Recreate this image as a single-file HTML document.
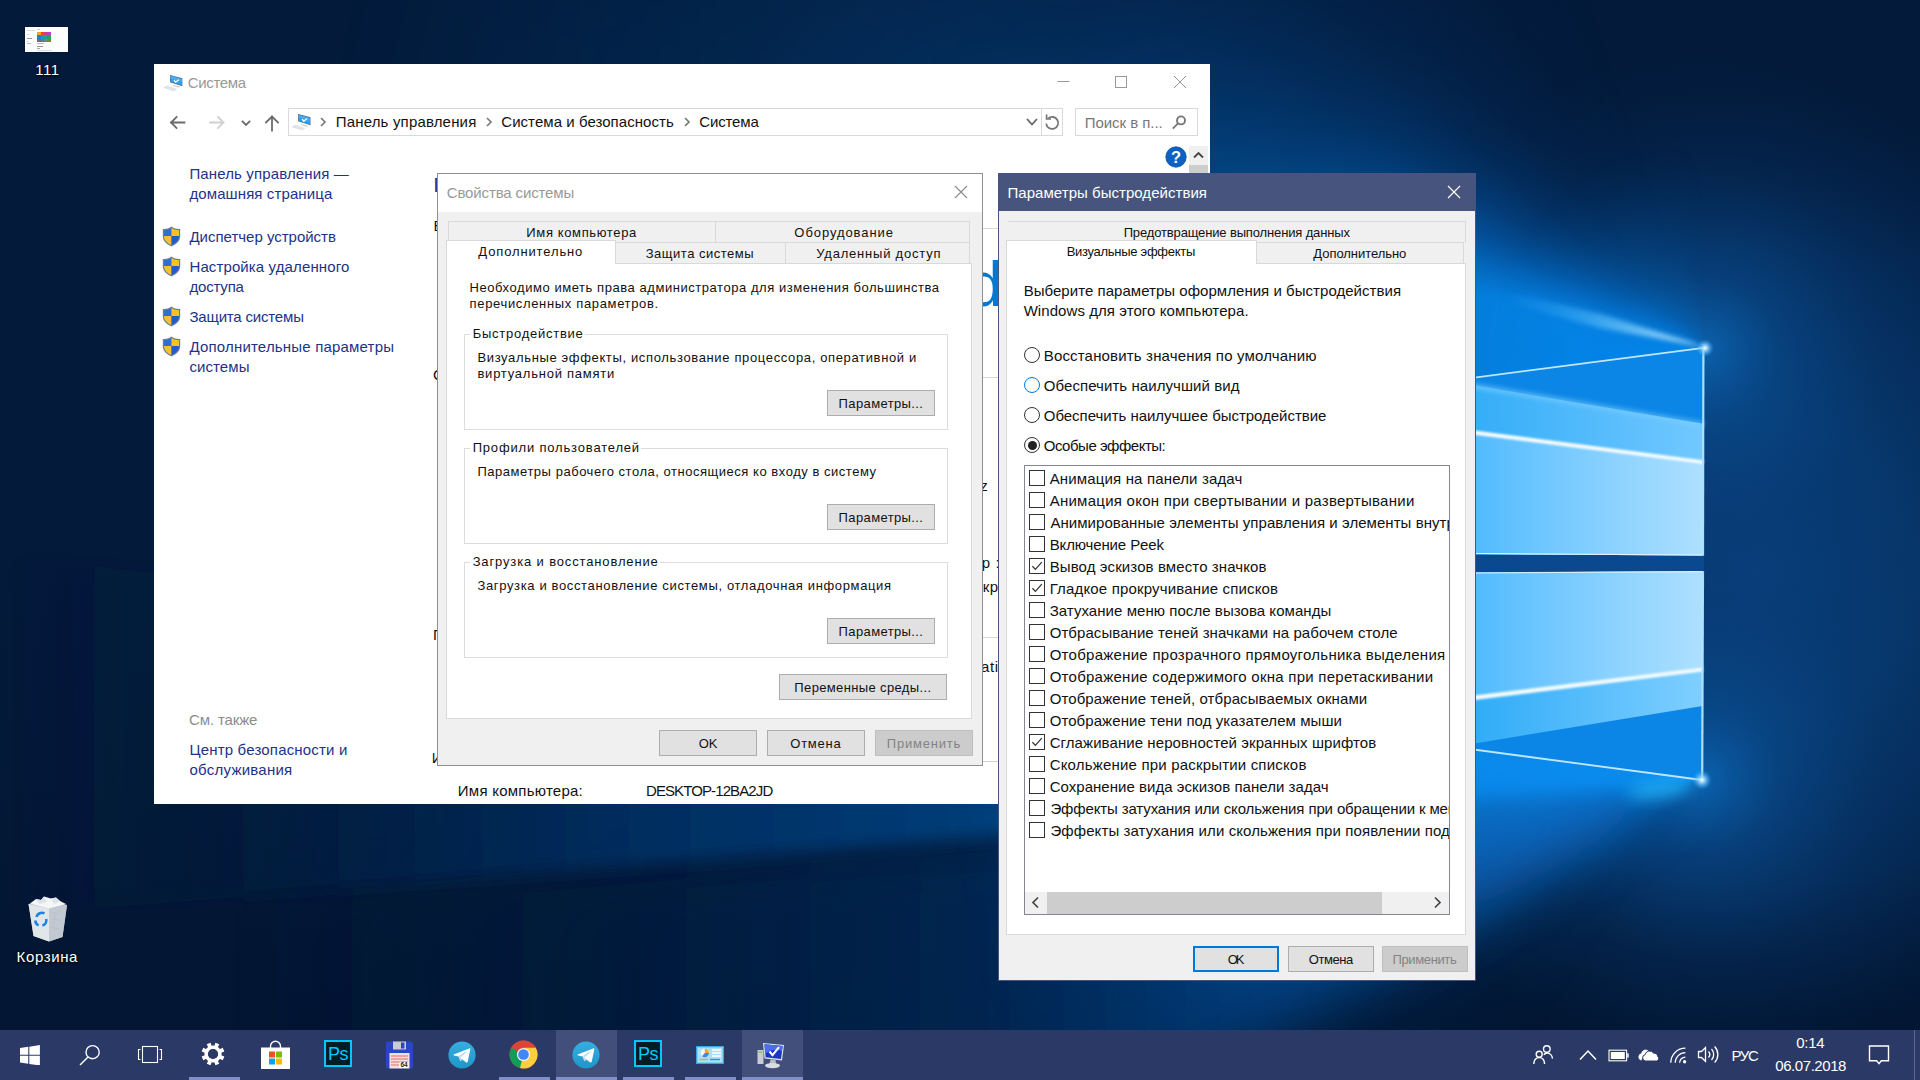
<!DOCTYPE html>
<html lang="ru"><head><meta charset="utf-8"><title>Система</title>
<style>
html,body{margin:0;padding:0;background:#03173a;overflow:hidden}
body{width:1920px;height:1080px;overflow:hidden;position:relative;font-family:"Liberation Sans", "DejaVu Sans", sans-serif;}
.wall{position:absolute;left:0;top:0}
.t{position:absolute;white-space:nowrap;line-height:1;font-family:"Liberation Sans", "DejaVu Sans", sans-serif}
.abs{position:absolute}
.btn{position:absolute;box-sizing:border-box;background:#e1e1e1;border:1px solid #adadad}
.btn.dis{background:#cccccc;border-color:#bfbfbf}
.btn.def{border:2px solid #0078d7}
.grp{position:absolute;box-sizing:border-box;border:1px solid #dcdcdc}
.tab{position:absolute;box-sizing:border-box;background:#f0f0f0;border:1px solid #d9d9d9}
.tab.sel{background:#fff;border-bottom:none}
.page{position:absolute;box-sizing:border-box;background:#fff;border:1px solid #d9d9d9}
.cb{position:absolute;box-sizing:border-box;width:16px;height:16px;border:1px solid #333;background:#fff}
.rad{position:absolute;box-sizing:border-box;width:16px;height:16px;border:1px solid #333;border-radius:50%;background:#fff}
.sh{text-shadow:0 1px 2px rgba(0,0,0,.9),0 0 3px rgba(0,0,0,.6)}
</style></head><body>

<svg class="wall" width="1920" height="1080" viewBox="0 0 1920 1080">
<defs>
<linearGradient id="gBase" x1="0" y1="0" x2="0" y2="1"><stop offset="0" stop-color="#031a3a"/><stop offset=".5" stop-color="#031a3b"/><stop offset=".72" stop-color="#031938"/><stop offset="1" stop-color="#021531"/></linearGradient>
<radialGradient id="gRight" cx="1760" cy="570" r="520" gradientUnits="userSpaceOnUse" gradientTransform="translate(1760 570) scale(1 .95) translate(-1760 -570)">
 <stop offset="0" stop-color="#083c76"/><stop offset=".3" stop-color="#07376c" stop-opacity=".95"/><stop offset=".65" stop-color="#052c5a" stop-opacity=".7"/><stop offset="1" stop-color="#031b3c" stop-opacity="0"/>
</radialGradient>
<radialGradient id="gFanU" cx="1704" cy="348" r="1200" gradientUnits="userSpaceOnUse">
 <stop offset="0" stop-color="#0e74cc"/><stop offset=".12" stop-color="#0a5cac" stop-opacity=".95"/><stop offset=".3" stop-color="#074684" stop-opacity=".85"/><stop offset=".55" stop-color="#053768" stop-opacity=".7"/><stop offset="1" stop-color="#042a54" stop-opacity=".0"/>
</radialGradient>
<radialGradient id="gFanL" cx="1702" cy="780" r="700" gradientUnits="userSpaceOnUse">
 <stop offset="0" stop-color="#0f84e4"/><stop offset=".3" stop-color="#0a60b4" stop-opacity=".85"/><stop offset=".65" stop-color="#063c78" stop-opacity=".5"/><stop offset="1" stop-color="#04204a" stop-opacity="0"/>
</radialGradient>
<linearGradient id="gUpA" x1="1476" y1="0" x2="1703" y2="0" gradientUnits="userSpaceOnUse"><stop offset="0" stop-color="#35aef8"/><stop offset="1" stop-color="#72c8ff"/></linearGradient>
<linearGradient id="gUpB" x1="1476" y1="0" x2="1703" y2="0" gradientUnits="userSpaceOnUse"><stop offset="0" stop-color="#52bbfe"/><stop offset=".55" stop-color="#86d0ff"/><stop offset="1" stop-color="#aee0ff"/></linearGradient>
<linearGradient id="gLoA" x1="1476" y1="0" x2="1703" y2="0" gradientUnits="userSpaceOnUse"><stop offset="0" stop-color="#52bbfe"/><stop offset=".55" stop-color="#86d0ff"/><stop offset="1" stop-color="#aee0ff"/></linearGradient>
<linearGradient id="gLoB" x1="1476" y1="0" x2="1703" y2="0" gradientUnits="userSpaceOnUse"><stop offset="0" stop-color="#30acf8"/><stop offset="1" stop-color="#7fcfff"/></linearGradient>
<linearGradient id="gBeamU" x1="1704" y1="0" x2="0" y2="0" gradientUnits="userSpaceOnUse"><stop offset="0" stop-color="#48b8fb"/><stop offset=".03" stop-color="#22a0f2"/><stop offset=".06" stop-color="#108ee8"/><stop offset=".12" stop-color="#0b80dc"/><stop offset=".2" stop-color="#0a6cc4"/><stop offset=".3" stop-color="#09529f"/><stop offset=".6" stop-color="#063d7c"/><stop offset="1" stop-color="#052c5a"/></linearGradient>
<linearGradient id="gBeamL" x1="1590" y1="765" x2="1562" y2="975" gradientUnits="userSpaceOnUse"><stop offset="0" stop-color="#0e8df0"/><stop offset=".2" stop-color="#0c7ee0"/><stop offset=".45" stop-color="#0a66c2" stop-opacity=".9"/><stop offset=".7" stop-color="#074a94" stop-opacity=".6"/><stop offset="1" stop-color="#05356e" stop-opacity="0"/></linearGradient>
<filter id="b1" filterUnits="userSpaceOnUse" x="-600" y="-600" width="3200" height="2400"><feGaussianBlur stdDeviation=".8"/></filter>
<filter id="b3" filterUnits="userSpaceOnUse" x="-600" y="-600" width="3200" height="2400"><feGaussianBlur stdDeviation="2.5"/></filter>
<filter id="b8" filterUnits="userSpaceOnUse" x="-600" y="-600" width="3200" height="2400"><feGaussianBlur stdDeviation="8"/></filter>
<filter id="b20" filterUnits="userSpaceOnUse" x="-600" y="-600" width="3200" height="2400"><feGaussianBlur stdDeviation="20"/></filter>
<filter id="b30" filterUnits="userSpaceOnUse" x="-600" y="-600" width="3200" height="2400"><feGaussianBlur stdDeviation="28"/></filter>
<filter id="b40" filterUnits="userSpaceOnUse" x="-600" y="-600" width="3200" height="2400"><feGaussianBlur stdDeviation="40"/></filter>
<linearGradient id="gFarL1" x1="1702" y1="0" x2="0" y2="0" gradientUnits="userSpaceOnUse"><stop offset="0" stop-color="#0e8df0"/><stop offset=".133" stop-color="#0c7de1"/><stop offset=".3" stop-color="#05509e"/><stop offset=".41" stop-color="#003e7a"/><stop offset=".59" stop-color="#023064"/><stop offset=".72" stop-color="#022652" stop-opacity=".9"/><stop offset=".9" stop-color="#031c3e" stop-opacity=".3"/><stop offset="1" stop-color="#031a3b" stop-opacity="0"/></linearGradient>
<linearGradient id="gFarL2" x1="1702" y1="0" x2="0" y2="0" gradientUnits="userSpaceOnUse"><stop offset="0" stop-color="#0a64be" stop-opacity=".9"/><stop offset=".133" stop-color="#0855aa" stop-opacity=".85"/><stop offset=".41" stop-color="#032d5f" stop-opacity=".8"/><stop offset=".65" stop-color="#021e42" stop-opacity=".6"/><stop offset=".85" stop-color="#031a3b" stop-opacity="0"/></linearGradient>
<linearGradient id="gRayU" x1="1706" y1="0" x2="1500" y2="0" gradientUnits="userSpaceOnUse"><stop offset="0" stop-color="#eaf8ff" stop-opacity=".95"/><stop offset=".3" stop-color="#9adcff" stop-opacity=".7"/><stop offset=".7" stop-color="#4ab8fa" stop-opacity=".35"/><stop offset="1" stop-color="#2aa0f0" stop-opacity="0"/></linearGradient>
<radialGradient id="gCorner"><stop offset="0" stop-color="#0e78d0" stop-opacity=".7"/><stop offset=".25" stop-color="#0a5eae" stop-opacity=".4"/><stop offset=".6" stop-color="#084a8e" stop-opacity=".15"/><stop offset="1" stop-color="#063a74" stop-opacity="0"/></radialGradient>
<radialGradient id="gStar"><stop offset="0" stop-color="#fff"/><stop offset=".3" stop-color="#9fdcff" stop-opacity=".85"/><stop offset="1" stop-color="#2a9cf5" stop-opacity="0"/></radialGradient>
</defs>
<rect width="1920" height="1080" fill="url(#gBase)"/>
<rect x="1200" y="0" width="720" height="1080" fill="url(#gRight)"/>
<circle cx="1704" cy="348" r="300" fill="url(#gCorner)"/>
<circle cx="1702" cy="780" r="300" fill="url(#gCorner)"/>
<polygon points="1702,780 -200,932 -200,1900" fill="url(#gFarL2)" filter="url(#b30)" opacity=".85"/>
<polygon points="1702,780 -200,526 -200,932" fill="url(#gFarL1)" filter="url(#b8)"/>
</svg>
<div class="abs" style="left:0;top:0;width:1920px;height:1080px;background:conic-gradient(from 0deg at 1704px 348px,rgba(4,134,234,0) 0deg,rgba(4,134,234,0) 255deg,rgba(4,134,234,1) 262deg,rgba(4,134,234,1) 283deg,rgba(4,128,226,.98) 286deg,rgba(4,116,210,.9) 291deg,rgba(3,100,188,.77) 297deg,rgba(3,84,162,.6) 304deg,rgba(2,68,135,.42) 312deg,rgba(2,55,112,.25) 321deg,rgba(2,46,96,.12) 330deg,rgba(2,40,85,0) 342deg,rgba(2,40,85,0) 360deg);-webkit-mask-image:radial-gradient(circle at 1704px 348px,rgba(0,0,0,1) 0,rgba(0,0,0,.97) 120px,rgba(0,0,0,.9) 260px,rgba(0,0,0,.55) 450px,rgba(0,0,0,.28) 700px,rgba(0,0,0,.12) 1000px,rgba(0,0,0,0) 1400px);mask-image:radial-gradient(circle at 1704px 348px,rgba(0,0,0,1) 0,rgba(0,0,0,.97) 120px,rgba(0,0,0,.9) 260px,rgba(0,0,0,.55) 450px,rgba(0,0,0,.28) 700px,rgba(0,0,0,.12) 1000px,rgba(0,0,0,0) 1400px)"></div>
<div class="abs" style="left:0;top:0;width:1920px;height:1080px;background:conic-gradient(from 0deg at 1702px 780px,rgba(8,130,228,0) 0deg,rgba(8,130,228,0) 212deg,rgba(8,130,228,.03) 225deg,rgba(8,130,228,.1) 233deg,rgba(8,130,228,.18) 237deg,rgba(8,130,228,.25) 242deg,rgba(8,130,228,.36) 247deg,rgba(8,130,228,.5) 253deg,rgba(8,130,228,.64) 258deg,rgba(9,134,232,.82) 265deg,rgba(10,138,236,.96) 270deg,rgba(10,140,238,1) 277.6deg,rgba(10,140,238,0) 281deg,rgba(10,140,238,0) 360deg);-webkit-mask-image:radial-gradient(circle at 1702px 780px,rgba(0,0,0,1) 0,rgba(0,0,0,.97) 150px,rgba(0,0,0,.9) 260px,rgba(0,0,0,.45) 420px,rgba(0,0,0,.12) 600px,rgba(0,0,0,0) 750px);mask-image:radial-gradient(circle at 1702px 780px,rgba(0,0,0,1) 0,rgba(0,0,0,.97) 150px,rgba(0,0,0,.9) 260px,rgba(0,0,0,.45) 420px,rgba(0,0,0,.12) 600px,rgba(0,0,0,0) 750px)"></div>
<div class="abs" style="left:1400px;top:60px;width:420px;height:420px;background:conic-gradient(from 0deg at 304px 288px,rgba(4,124,220,0) 0deg,rgba(4,124,220,0) 262deg,rgba(4,124,220,.9) 283deg,rgba(4,124,220,.85) 300deg,rgba(4,124,220,.6) 318deg,rgba(4,124,220,.3) 336deg,rgba(4,124,220,.1) 350deg,rgba(4,124,220,0) 360deg);-webkit-mask-image:radial-gradient(circle at 304px 288px,rgba(0,0,0,.9) 0,rgba(0,0,0,.7) 50px,rgba(0,0,0,.4) 100px,rgba(0,0,0,.15) 160px,rgba(0,0,0,0) 210px);mask-image:radial-gradient(circle at 304px 288px,rgba(0,0,0,.9) 0,rgba(0,0,0,.7) 50px,rgba(0,0,0,.4) 100px,rgba(0,0,0,.15) 160px,rgba(0,0,0,0) 210px)"></div>
<svg class="wall" width="1920" height="1080" viewBox="0 0 1920 1080">
<ellipse cx="1660" cy="789" rx="34" ry="8" fill="#2cc0ff" opacity=".7" filter="url(#b8)" transform="rotate(-8 1660 789)"/>
<!-- gap band between panes -->
<polygon points="1000,545 1704,554 1704,572 1000,580" fill="#0a4990"/>
<!-- upper pane: wedge / mid / lower regions -->
<polygon points="1000,439.5 1703.6,347.6 1703.2,555.6 1000,551" fill="#0c86e6"/>
<polygon points="1000,305.5 1703.3,423.8 1703.2,555.6 1000,551" fill="url(#gUpA)"/>
<polygon points="1000,369 1703.3,462 1703.2,555.6 1000,551" fill="url(#gUpB)"/>
<polygon points="1000,304 1703.3,422.4 1703.3,426 1000,309" fill="#7fd0ff" opacity=".8" filter="url(#b3)"/>
<!-- lower pane -->
<polygon points="1000,575 1703.2,571.2 1702.2,780 1000,686.4" fill="#0c86e6"/>
<polygon points="1000,575 1703.2,571.2 1702.6,706 1000,821.5" fill="url(#gLoB)"/>
<polygon points="1000,575 1703.2,571.2 1702.8,669 1000,756" fill="url(#gLoA)"/>
<!-- bright streaks -->
<polygon points="1000,369 1703.3,460.2 1703.3,464 1000,374.5" fill="#f4fbff" filter="url(#b1)"/>
<polygon points="1000,754 1702.8,667.4 1702.8,671.4 1000,759.5" fill="#f4fbff" filter="url(#b1)"/>
<!-- pane edges -->
<line x1="1000" y1="439.5" x2="1703.6" y2="347.8" stroke="#c8ecff" stroke-width="1.8" opacity=".95"/>
<line x1="1000" y1="686.4" x2="1702.2" y2="780" stroke="#c8ecff" stroke-width="1.8" opacity=".95"/>
<line x1="1000" y1="550.5" x2="1703.2" y2="555" stroke="#e8f7ff" stroke-width="1.2" opacity=".9"/>
<line x1="1000" y1="575.5" x2="1703.2" y2="571.7" stroke="#e8f7ff" stroke-width="1.2" opacity=".8"/>
<line x1="1703.4" y1="348" x2="1703" y2="555.5" stroke="#b4e3ff" stroke-width="2.2" opacity=".95"/>
<line x1="1703" y1="571.5" x2="1702.2" y2="780" stroke="#b4e3ff" stroke-width="2.2" opacity=".95"/>
<!-- bright part of upper ray near the corner -->
<polygon points="1706,347 1600,314 1500,290 1500,300 1600,328" fill="url(#gRayU)" filter="url(#b3)"/>
<circle cx="1705" cy="348" r="9" fill="url(#gStar)"/>
<circle cx="1702" cy="780" r="10" fill="url(#gStar)"/>

</svg>
<div class="" style="position:absolute;left:25px;top:27.3px;width:43px;height:24.7px;background:#fdfdfd;box-shadow:0 0 1px rgba(0,0,0,.5)"><div class="" style="position:absolute;left:12.2px;top:4.7px;width:14px;height:3.3px;background:linear-gradient(90deg,#f7a41d 0 25%,#ea4a2a 25% 50%,#d13a8f 50% 75%,#b63fd0 75%)"></div><div class="" style="position:absolute;left:12.2px;top:8px;width:14px;height:3.3px;background:linear-gradient(90deg,#1f7fd8 0 25%,#1a9bb8 25% 50%,#18a890 50% 75%,#22a84a 75%)"></div><div class="" style="position:absolute;left:12.2px;top:11.3px;width:14px;height:3.3px;background:linear-gradient(90deg,#6f6f6f 0 25%,#66788a 25% 50%,#6b8a7a 50% 75%,#7a8a3a 75%)"></div><div class="" style="position:absolute;left:1.5px;top:2.5px;width:8.5px;height:0.8px;background:#ddd"></div><div class="" style="position:absolute;left:1.5px;top:6.5px;width:3.5px;height:0.7px;background:#ddd"></div><div class="" style="position:absolute;left:1.5px;top:11px;width:5px;height:0.8px;background:#999"></div><div class="" style="position:absolute;left:1.5px;top:13.5px;width:2.5px;height:0.7px;background:#ddd"></div><div class="" style="position:absolute;left:1.5px;top:16px;width:4px;height:0.8px;background:#bbb"></div><div class="" style="position:absolute;left:12.2px;top:1.5px;width:2.8px;height:0.8px;background:#ccc"></div><div class="" style="position:absolute;left:12.2px;top:16px;width:7.3px;height:0.8px;background:#bbb"></div><div class="" style="position:absolute;left:12.2px;top:19px;width:5.8px;height:0.8px;background:#999"></div><div class="" style="position:absolute;left:12.2px;top:21px;width:2.8px;height:0.8px;background:#aaa"></div><div class="" style="position:absolute;left:12.2px;top:23px;width:14.8px;height:0.5px;background:#ddd"></div></div>
<span class="t sh" style="left:35.25px;top:62px;font-size:15px;color:#fff;letter-spacing:0.500px;">111</span>
<svg class="abs" style="left:27px;top:895px" width="42" height="48" viewBox="0 0 42 48">
<path d="M1.5 9 L22 4.5 L40 10 L35.5 42 L22 46.5 L6.5 41Z" fill="#d3d8de" opacity=".9"/>
<path d="M1.5 9 L22 13.5 L22 46.5 L6.5 41Z" fill="#e4e8ec" opacity=".92"/>
<path d="M22 13.5 L40 10 L35.5 42 L22 46.5Z" fill="#c3c9d0" opacity=".92"/>
<path d="M3 8.5 L9 4 L14 5 L17 1.5 L24 3.5 L29 2.5 L33 6 L39 9 L22 13.5Z" fill="#f4f6f8"/>
<path d="M9 4 L14 5 L17 1.5 L20 7 L12 9Z M24 3.5 L29 2.5 L33 6 L27 9Z" fill="#dfe3e8"/>
<g fill="none" stroke="#1b84e0" stroke-width="2.6"><path d="M9.5 22 a5.5 5.5 0 0 1 8-3.6"/><path d="M19.2 24 a5.5 5.5 0 0 1-3.8 6.6"/><path d="M11.6 30.4 a5.5 5.5 0 0 1-3.2-5"/></g>
<path d="M24 17 l7 2 M25 24 l8 1.5 M24 32 l8 2 M28 20 l-2 14" stroke="#b4bbc4" stroke-width=".8" opacity=".8"/>
</svg>
<span class="t sh" style="left:16.55px;top:949px;font-size:15px;color:#fff;letter-spacing:0.627px;">Корзина</span>
<div class="" style="position:absolute;left:154px;top:64px;width:1056px;height:740px;background:#fff;overflow:hidden"></div>
<svg style="position:absolute;left:164px;top:75px" width="19.4" height="16.974999999999998" viewBox="0 0 20 17.5">
<path d="M6.2 0 L18.9 3.4 L18.9 11.6 L6.2 7.4Z" fill="#5a6470"/>
<path d="M6.8 .9 L18.3 4 L18.3 10.7 L6.8 6.9Z" fill="#2f9ff3"/>
<path d="M6.8 .9 L18.3 4 L18.3 7 L6.8 3.6Z" fill="#48adf6"/>
<path d="M10.3 5.2 l1.7 2.2 l3.2-2.6" stroke="#fff" stroke-width="1.3" fill="none"/>
<path d="M9.8 10.4 L16.6 12.2 L15.4 12.9 L9.2 11.2Z" fill="#b9c0c8"/>
<path d="M3.1 10.9 L13.8 14.6 L10.1 16.7 L-.5 13.3Z" fill="#d9dde3"/>
<path d="M3.3 11.9 L12 14.9 M2 12.7 L10.8 15.7" stroke="#eef0f3" stroke-width=".5"/>
</svg>
<span class="t " style="left:187.75px;top:75px;font-size:15px;color:#999;letter-spacing:-0.352px;">Система</span>
<svg class="abs" style="left:1040px;top:64px" width="170" height="36" viewBox="0 0 170 36" fill="none" stroke="#999" stroke-width="1">
<path d="M17.5 17.5 H29.5"/><rect x="75.5" y="12.5" width="11" height="11"/><path d="M134 12 L146 24 M146 12 L134 24"/></svg>
<svg class="abs" style="left:165px;top:108px" width="120" height="30" viewBox="0 0 120 30" fill="none" stroke-linecap="square">
<path d="M6 14.5 H19.5 M11.5 9 L6 14.5 L11.5 20" stroke="#6b6b6b" stroke-width="1.8"/>
<path d="M45 14.5 H58.5 M53 9 L58.5 14.5 L53 20" stroke="#d0d0d0" stroke-width="1.8"/>
<path d="M77.5 13.5 L81 17 L84.5 13.5" stroke="#6b6b6b" stroke-width="1.8"/>
<path d="M107 22.5 V8.5 M101 14.5 L107 8.5 L113 14.5" stroke="#6b6b6b" stroke-width="1.8"/>
</svg>
<div class="" style="position:absolute;left:288px;top:108px;width:775px;height:28px;box-sizing:border-box;border:1px solid #d9d9d9;background:#fff"></div>
<div class="" style="position:absolute;left:1041px;top:109px;width:1px;height:26px;background:#d9d9d9"></div>
<svg style="position:absolute;left:291.5px;top:113.5px" width="19.6" height="17.15" viewBox="0 0 20 17.5">
<path d="M6.2 0 L18.9 3.4 L18.9 11.6 L6.2 7.4Z" fill="#5a6470"/>
<path d="M6.8 .9 L18.3 4 L18.3 10.7 L6.8 6.9Z" fill="#2f9ff3"/>
<path d="M6.8 .9 L18.3 4 L18.3 7 L6.8 3.6Z" fill="#48adf6"/>
<path d="M10.3 5.2 l1.7 2.2 l3.2-2.6" stroke="#fff" stroke-width="1.3" fill="none"/>
<path d="M9.8 10.4 L16.6 12.2 L15.4 12.9 L9.2 11.2Z" fill="#b9c0c8"/>
<path d="M3.1 10.9 L13.8 14.6 L10.1 16.7 L-.5 13.3Z" fill="#d9dde3"/>
<path d="M3.3 11.9 L12 14.9 M2 12.7 L10.8 15.7" stroke="#eef0f3" stroke-width=".5"/>
</svg>
<svg class="abs" style="left:318.5px;top:116px" width="8" height="12" viewBox="0 0 8 12" fill="none" stroke="#7a7a7a" stroke-width="1.7"><path d="M2 2 L6 6 L2 10"/></svg>
<svg class="abs" style="left:484.5px;top:116px" width="8" height="12" viewBox="0 0 8 12" fill="none" stroke="#7a7a7a" stroke-width="1.7"><path d="M2 2 L6 6 L2 10"/></svg>
<svg class="abs" style="left:682.5px;top:116px" width="8" height="12" viewBox="0 0 8 12" fill="none" stroke="#7a7a7a" stroke-width="1.7"><path d="M2 2 L6 6 L2 10"/></svg>
<span class="t " style="left:335.75px;top:114px;font-size:15px;color:#111;letter-spacing:0.169px;">Панель управления</span>
<span class="t " style="left:501.25px;top:114px;font-size:15px;color:#111;letter-spacing:0.053px;">Система и безопасность</span>
<span class="t " style="left:699.25px;top:114px;font-size:15px;color:#111;letter-spacing:-0.152px;">Система</span>
<svg class="abs" style="left:1025px;top:117px" width="14" height="10" viewBox="0 0 14 10" fill="none" stroke="#666" stroke-width="1.8"><path d="M2 2 L7 7.5 L12 2"/></svg>
<svg class="abs" style="left:1043px;top:113px" width="18" height="18" viewBox="0 0 18 18" fill="none" stroke="#777" stroke-width="1.8"><path d="M5.2 5.4 A6 6 0 1 1 3.2 10.6"/><path d="M3.6 1.6 V6 H8" stroke-width="1.7"/></svg>
<div class="" style="position:absolute;left:1075px;top:108px;width:123px;height:28px;box-sizing:border-box;border:1px solid #d9d9d9;background:#fff"></div>
<span class="t " style="left:1084.75px;top:115px;font-size:15px;color:#777;letter-spacing:-0.045px;">Поиск в п...</span>
<svg class="abs" style="left:1171px;top:114px" width="16" height="16" viewBox="0 0 16 16" fill="none" stroke="#777" stroke-width="1.9"><circle cx="10" cy="6.4" r="4"/><path d="M7 9.4 L1.8 14.6"/></svg>
<svg class="abs" style="left:1165px;top:146px" width="22" height="22" viewBox="0 0 22 22"><circle cx="11" cy="11" r="10.2" fill="#0b62c4" stroke="#0a4fa0" stroke-width=".8"/><text x="11" y="17" text-anchor="middle" font-family='Liberation Sans, DejaVu Sans, sans-serif' font-size="16.5" font-weight="bold" fill="#fff">?</text></svg>
<div class="" style="position:absolute;left:1189px;top:146px;width:19px;height:658px;background:#f0f0f0"></div>
<div class="" style="position:absolute;left:1189px;top:165px;width:19px;height:639px;background:#cdcdcd"></div>
<svg class="abs" style="left:1193px;top:151px" width="11" height="8" viewBox="0 0 11 8" fill="none" stroke="#444" stroke-width="1.8"><path d="M1 6.5 L5.5 2 L10 6.5"/></svg>
<span class="t " style="left:189.45px;top:166px;font-size:15px;color:#1e3287;letter-spacing:0.130px;">Панель управления —</span>
<span class="t " style="left:189.45px;top:186px;font-size:15px;color:#1e3287;letter-spacing:0.104px;">домашняя страница</span>
<svg style="position:absolute;left:161.8px;top:225.5px" width="19" height="21" viewBox="0 0 19 21">
<path d="M9.5 .6 C6.5 2.8 3.6 3.2 .8 3 V10 C.8 15 4.5 18.3 9.5 20.4 C14.5 18.3 18.2 15 18.2 10 V3 C15.4 3.2 12.5 2.8 9.5 .6Z" fill="#6d7f96"/>
<path d="M9.5 2 C7 3.7 4.4 4.3 2 4.2 V10 H9.5Z" fill="#2a6fd6"/>
<path d="M9.5 2 C12 3.7 14.6 4.3 17 4.2 V10 H9.5Z" fill="#fbbf2d"/>
<path d="M2 10 C2 14.3 5.2 17.2 9.5 19 V10Z" fill="#fbbf2d"/>
<path d="M17 10 C17 14.3 13.8 17.2 9.5 19 V10Z" fill="#1f5fc4"/>
</svg>
<svg style="position:absolute;left:161.8px;top:255.5px" width="19" height="21" viewBox="0 0 19 21">
<path d="M9.5 .6 C6.5 2.8 3.6 3.2 .8 3 V10 C.8 15 4.5 18.3 9.5 20.4 C14.5 18.3 18.2 15 18.2 10 V3 C15.4 3.2 12.5 2.8 9.5 .6Z" fill="#6d7f96"/>
<path d="M9.5 2 C7 3.7 4.4 4.3 2 4.2 V10 H9.5Z" fill="#2a6fd6"/>
<path d="M9.5 2 C12 3.7 14.6 4.3 17 4.2 V10 H9.5Z" fill="#fbbf2d"/>
<path d="M2 10 C2 14.3 5.2 17.2 9.5 19 V10Z" fill="#fbbf2d"/>
<path d="M17 10 C17 14.3 13.8 17.2 9.5 19 V10Z" fill="#1f5fc4"/>
</svg>
<svg style="position:absolute;left:161.8px;top:305.5px" width="19" height="21" viewBox="0 0 19 21">
<path d="M9.5 .6 C6.5 2.8 3.6 3.2 .8 3 V10 C.8 15 4.5 18.3 9.5 20.4 C14.5 18.3 18.2 15 18.2 10 V3 C15.4 3.2 12.5 2.8 9.5 .6Z" fill="#6d7f96"/>
<path d="M9.5 2 C7 3.7 4.4 4.3 2 4.2 V10 H9.5Z" fill="#2a6fd6"/>
<path d="M9.5 2 C12 3.7 14.6 4.3 17 4.2 V10 H9.5Z" fill="#fbbf2d"/>
<path d="M2 10 C2 14.3 5.2 17.2 9.5 19 V10Z" fill="#fbbf2d"/>
<path d="M17 10 C17 14.3 13.8 17.2 9.5 19 V10Z" fill="#1f5fc4"/>
</svg>
<svg style="position:absolute;left:161.8px;top:335.5px" width="19" height="21" viewBox="0 0 19 21">
<path d="M9.5 .6 C6.5 2.8 3.6 3.2 .8 3 V10 C.8 15 4.5 18.3 9.5 20.4 C14.5 18.3 18.2 15 18.2 10 V3 C15.4 3.2 12.5 2.8 9.5 .6Z" fill="#6d7f96"/>
<path d="M9.5 2 C7 3.7 4.4 4.3 2 4.2 V10 H9.5Z" fill="#2a6fd6"/>
<path d="M9.5 2 C12 3.7 14.6 4.3 17 4.2 V10 H9.5Z" fill="#fbbf2d"/>
<path d="M2 10 C2 14.3 5.2 17.2 9.5 19 V10Z" fill="#fbbf2d"/>
<path d="M17 10 C17 14.3 13.8 17.2 9.5 19 V10Z" fill="#1f5fc4"/>
</svg>
<span class="t " style="left:189.45px;top:229px;font-size:15px;color:#1e3287;letter-spacing:-0.008px;">Диспетчер устройств</span>
<span class="t " style="left:189.45px;top:259px;font-size:15px;color:#1e3287;letter-spacing:0.116px;">Настройка удаленного</span>
<span class="t " style="left:189.45px;top:279px;font-size:15px;color:#1e3287;letter-spacing:-0.183px;">доступа</span>
<span class="t " style="left:189.45px;top:309px;font-size:15px;color:#1e3287;letter-spacing:-0.181px;">Защита системы</span>
<span class="t " style="left:189.45px;top:339px;font-size:15px;color:#1e3287;letter-spacing:0.187px;">Дополнительные параметры</span>
<span class="t " style="left:189.45px;top:359px;font-size:15px;color:#1e3287;letter-spacing:0.081px;">системы</span>
<span class="t " style="left:189.05px;top:712px;font-size:15px;color:#8c8c8c;letter-spacing:-0.133px;">См. также</span>
<span class="t " style="left:189.45px;top:742px;font-size:15px;color:#1e3287;letter-spacing:0.180px;">Центр безопасности и</span>
<span class="t " style="left:189.45px;top:762px;font-size:15px;color:#1e3287;letter-spacing:0.252px;">обслуживания</span>
<span class="t " style="left:433.40px;top:175px;font-size:20px;color:#1e3287;">Просмотр основных сведений о вашем компьютере</span>
<span class="t " style="left:433.45px;top:218px;font-size:15px;color:#111;">Выпуск Windows</span>
<div class="" style="position:absolute;left:560px;top:228px;width:620px;height:1px;background:#d8d8d8"></div>
<span class="t " style="left:858.92px;top:253px;font-size:63px;color:#0078d7;">Wind</span>
<span class="t " style="left:432.95px;top:367px;font-size:15px;color:#111;">Система</span>
<div class="" style="position:absolute;left:500px;top:377px;width:680px;height:1px;background:#d8d8d8"></div>
<span class="t " style="left:868.25px;top:478px;font-size:15px;color:#111;letter-spacing:-0.480px;">2.50GHz   2.70 GHz</span>
<span class="t " style="left:879.25px;top:555px;font-size:15px;color:#111;letter-spacing:0.683px;">x64-процессор :</span>
<span class="t " style="left:829.25px;top:579px;font-size:15px;color:#111;letter-spacing:0.283px;">доступны для этого экр</span>
<span class="t " style="left:433.05px;top:627px;font-size:15px;color:#111;">Поддержка</span>
<div class="" style="position:absolute;left:520px;top:637px;width:660px;height:1px;background:#d8d8d8"></div>
<span class="t " style="left:869.25px;top:659px;font-size:15px;color:#111;letter-spacing:0.661px;">Online support ati</span>
<span class="t " style="left:431.85px;top:750px;font-size:15px;color:#111;letter-spacing:-0.298px;">Имя компьютера, имя домена и параметры рабочей группы</span>
<div class="" style="position:absolute;left:850px;top:761px;width:330px;height:1px;background:#d0d0d0"></div>
<span class="t " style="left:457.85px;top:783px;font-size:15px;color:#111;letter-spacing:0.241px;">Имя компьютера:</span>
<span class="t " style="left:645.95px;top:783px;font-size:15px;color:#111;letter-spacing:-0.891px;">DESKTOP-12BA2JD</span>
<div class="" style="position:absolute;left:437px;top:173px;width:546px;height:593px;box-sizing:border-box;border:1px solid #8e8e8e;background:#f0f0f0"></div>
<div class="" style="position:absolute;left:438px;top:174px;width:544px;height:37.5px;background:#fff"></div>
<span class="t " style="left:446.75px;top:185px;font-size:15px;color:#999;letter-spacing:-0.137px;">Свойства системы</span>
<svg class="abs" style="left:953px;top:184px" width="16" height="16" viewBox="0 0 16 16" fill="none" stroke="#8a8a8a" stroke-width="1.1"><path d="M2 2 L14 14 M14 2 L2 14"/></svg>
<div class="tab" style="left:448px;top:221px;width:268px;height:22px"></div>
<div class="tab" style="left:715px;top:221px;width:255px;height:22px"></div>
<div class="tab" style="left:615px;top:242px;width:171px;height:22px"></div>
<div class="tab" style="left:785px;top:242px;width:185px;height:22px"></div>
<div class="page" style="left:446px;top:263px;width:526px;height:456px"></div>
<div class="tab sel" style="left:446px;top:240px;width:170px;height:24px"></div>
<span class="t " style="left:526.35px;top:226px;font-size:13px;color:#111;letter-spacing:0.630px;">Имя компьютера</span>
<span class="t " style="left:794.35px;top:226px;font-size:13px;color:#111;letter-spacing:0.926px;">Оборудование</span>
<span class="t " style="left:478.35px;top:245px;font-size:13px;color:#111;letter-spacing:0.870px;">Дополнительно</span>
<span class="t " style="left:645.75px;top:247px;font-size:13px;color:#111;letter-spacing:0.510px;">Защита системы</span>
<span class="t " style="left:816.35px;top:247px;font-size:13px;color:#111;letter-spacing:0.780px;">Удаленный доступ</span>
<span class="t " style="left:469.55px;top:281px;font-size:13px;color:#111;letter-spacing:0.553px;">Необходимо иметь права администратора для изменения большинства</span>
<span class="t " style="left:469.55px;top:297px;font-size:13px;color:#111;letter-spacing:0.656px;">перечисленных параметров.</span>
<div class="grp" style="left:464px;top:333.5px;width:484px;height:96px"></div>
<div class="" style="position:absolute;left:470px;top:327.5px;width:114.7px;height:14px;background:#fff"></div>
<span class="t " style="left:472.65px;top:327px;font-size:13px;color:#111;letter-spacing:0.751px;">Быстродействие</span>
<span class="t " style="left:477.45px;top:351px;font-size:13px;color:#111;letter-spacing:0.643px;">Визуальные эффекты, использование процессора, оперативной и</span>
<span class="t " style="left:477.45px;top:367px;font-size:13px;color:#111;letter-spacing:0.765px;">виртуальной памяти</span>
<div class="btn" style="left:827px;top:390.2px;width:108px;height:25.5px"></div>
<span class="t " style="left:838.55px;top:397px;font-size:13px;color:#111;letter-spacing:0.388px;">Параметры...</span>
<div class="grp" style="left:464px;top:447.5px;width:484px;height:96px"></div>
<div class="" style="position:absolute;left:470px;top:441.5px;width:171px;height:14px;background:#fff"></div>
<span class="t " style="left:472.65px;top:441px;font-size:13px;color:#111;letter-spacing:0.825px;">Профили пользователей</span>
<span class="t " style="left:477.45px;top:465px;font-size:13px;color:#111;letter-spacing:0.529px;">Параметры рабочего стола, относящиеся ко входу в систему</span>
<div class="btn" style="left:827px;top:504.3px;width:108px;height:25.5px"></div>
<span class="t " style="left:838.55px;top:511px;font-size:13px;color:#111;letter-spacing:0.388px;">Параметры...</span>
<div class="grp" style="left:464px;top:561.5px;width:484px;height:96px"></div>
<div class="" style="position:absolute;left:470px;top:555.5px;width:189.7px;height:14px;background:#fff"></div>
<span class="t " style="left:472.65px;top:555px;font-size:13px;color:#111;letter-spacing:0.859px;">Загрузка и восстановление</span>
<span class="t " style="left:477.45px;top:579px;font-size:13px;color:#111;letter-spacing:0.642px;">Загрузка и восстановление системы, отладочная информация</span>
<div class="btn" style="left:827px;top:618.3px;width:108px;height:25.5px"></div>
<span class="t " style="left:838.55px;top:625px;font-size:13px;color:#111;letter-spacing:0.388px;">Параметры...</span>
<div class="btn" style="left:779px;top:674.2px;width:168px;height:25.5px"></div>
<span class="t " style="left:794.35px;top:681px;font-size:13px;color:#111;letter-spacing:0.362px;">Переменные среды...</span>
<div class="btn" style="left:659.2px;top:730px;width:97.5px;height:25.5px"></div>
<span class="t " style="left:698.65px;top:737px;font-size:13px;color:#111;letter-spacing:0.017px;">OK</span>
<div class="btn" style="left:767px;top:730px;width:97.5px;height:25.5px"></div>
<span class="t " style="left:790.35px;top:737px;font-size:13px;color:#111;letter-spacing:0.731px;">Отмена</span>
<div class="btn dis" style="left:875px;top:730px;width:97.5px;height:25.5px"></div>
<span class="t " style="left:886.75px;top:737px;font-size:13px;color:#838383;letter-spacing:0.791px;">Применить</span>
<div class="" style="position:absolute;left:998px;top:173px;width:477.6px;height:808.3px;box-sizing:border-box;border:1px solid #47557e;background:#f0f0f0"></div>
<div class="" style="position:absolute;left:998px;top:173px;width:477.6px;height:38px;background:#47557e"></div>
<span class="t " style="left:1007.55px;top:185px;font-size:15px;color:#fff;letter-spacing:0.037px;">Параметры быстродействия</span>
<svg class="abs" style="left:1446px;top:184px" width="16" height="16" viewBox="0 0 16 16" fill="none" stroke="#fff" stroke-width="1.2"><path d="M2 2 L14 14 M14 2 L2 14"/></svg>
<div class="tab" style="left:1008px;top:221px;width:458px;height:22px;border-bottom:none;border-left-color:#f0f0f0"></div>
<div class="tab" style="left:1256px;top:242px;width:208px;height:22px"></div>
<div class="page" style="left:1006px;top:263px;width:460px;height:672px"></div>
<div class="tab sel" style="left:1006px;top:240px;width:251px;height:24px"></div>
<span class="t " style="left:1123.65px;top:226px;font-size:13px;color:#111;letter-spacing:-0.144px;">Предотвращение выполнения данных</span>
<span class="t " style="left:1066.65px;top:245px;font-size:13px;color:#111;letter-spacing:-0.285px;">Визуальные эффекты</span>
<span class="t " style="left:1313.35px;top:247px;font-size:13px;color:#111;letter-spacing:-0.047px;">Дополнительно</span>
<span class="t " style="left:1023.65px;top:283px;font-size:15px;color:#111;letter-spacing:0.039px;">Выберите параметры оформления и быстродействия</span>
<span class="t " style="left:1023.65px;top:303px;font-size:15px;color:#111;letter-spacing:0.069px;">Windows для этого компьютера.</span>
<div class="rad" style="left:1024px;top:347.2px;"></div>
<span class="t " style="left:1043.75px;top:348px;font-size:15px;color:#111;letter-spacing:0.164px;">Восстановить значения по умолчанию</span>
<div class="rad" style="left:1024px;top:377.3px;border-color:#0078d7"></div>
<span class="t " style="left:1043.75px;top:378px;font-size:15px;color:#111;letter-spacing:0.071px;">Обеспечить наилучший вид</span>
<div class="rad" style="left:1024px;top:407.3px;"></div>
<span class="t " style="left:1043.75px;top:408px;font-size:15px;color:#111;letter-spacing:-0.025px;">Обеспечить наилучшее быстродействие</span>
<div class="rad" style="left:1024px;top:437.2px;"><div style="position:absolute;left:2.5px;top:2.5px;width:9px;height:9px;border-radius:50%;background:#222"></div></div>
<span class="t " style="left:1043.75px;top:438px;font-size:15px;color:#111;letter-spacing:-0.485px;">Особые эффекты:</span>
<div class="" style="position:absolute;left:1024px;top:465px;width:426px;height:449.5px;box-sizing:border-box;border:1px solid #828790;background:#fff;overflow:hidden"></div>
<div class="abs" style="left:1025px;top:466px;width:424px;height:426px;overflow:hidden">
<div class="cb" style="left:4px;top:4px"></div>
<span class="t " style="left:24.65px;top:5px;font-size:15px;color:#111;letter-spacing:0.158px;">Анимация на панели задач</span>
<div class="cb" style="left:4px;top:26px"></div>
<span class="t " style="left:24.65px;top:27px;font-size:15px;color:#111;letter-spacing:0.263px;">Анимация окон при свертывании и развертывании</span>
<div class="cb" style="left:4px;top:48px"></div>
<span class="t" style="left:25.40px;top:49px;font-size:15px;color:#111;letter-spacing:0.052px">Анимированные элементы управления и элементы внутри окна</span>
<div class="cb" style="left:4px;top:70px"></div>
<span class="t " style="left:24.65px;top:71px;font-size:15px;color:#111;letter-spacing:-0.125px;">Включение Peek</span>
<div class="cb" style="left:4px;top:92px"><svg width="14" height="14" viewBox="0 0 14 14" style="position:absolute;left:0;top:0" fill="none" stroke="#333" stroke-width="1.25"><path d="M2.4 7.2 L5.4 10.4 L11.8 3.2"/></svg></div>
<span class="t " style="left:24.65px;top:93px;font-size:15px;color:#111;letter-spacing:0.107px;">Вывод эскизов вместо значков</span>
<div class="cb" style="left:4px;top:114px"><svg width="14" height="14" viewBox="0 0 14 14" style="position:absolute;left:0;top:0" fill="none" stroke="#333" stroke-width="1.25"><path d="M2.4 7.2 L5.4 10.4 L11.8 3.2"/></svg></div>
<span class="t " style="left:24.65px;top:115px;font-size:15px;color:#111;letter-spacing:0.164px;">Гладкое прокручивание списков</span>
<div class="cb" style="left:4px;top:136px"></div>
<span class="t " style="left:24.65px;top:137px;font-size:15px;color:#111;letter-spacing:0.056px;">Затухание меню после вызова команды</span>
<div class="cb" style="left:4px;top:158px"></div>
<span class="t " style="left:24.65px;top:159px;font-size:15px;color:#111;letter-spacing:0.074px;">Отбрасывание теней значками на рабочем столе</span>
<div class="cb" style="left:4px;top:180px"></div>
<span class="t " style="left:24.65px;top:181px;font-size:15px;color:#111;letter-spacing:0.268px;">Отображение прозрачного прямоугольника выделения</span>
<div class="cb" style="left:4px;top:202px"></div>
<span class="t " style="left:24.65px;top:203px;font-size:15px;color:#111;letter-spacing:0.261px;">Отображение содержимого окна при перетаскивании</span>
<div class="cb" style="left:4px;top:224px"></div>
<span class="t " style="left:24.65px;top:225px;font-size:15px;color:#111;letter-spacing:0.099px;">Отображение теней, отбрасываемых окнами</span>
<div class="cb" style="left:4px;top:246px"></div>
<span class="t " style="left:24.65px;top:247px;font-size:15px;color:#111;letter-spacing:0.079px;">Отображение тени под указателем мыши</span>
<div class="cb" style="left:4px;top:268px"><svg width="14" height="14" viewBox="0 0 14 14" style="position:absolute;left:0;top:0" fill="none" stroke="#333" stroke-width="1.25"><path d="M2.4 7.2 L5.4 10.4 L11.8 3.2"/></svg></div>
<span class="t " style="left:24.65px;top:269px;font-size:15px;color:#111;letter-spacing:0.077px;">Сглаживание неровностей экранных шрифтов</span>
<div class="cb" style="left:4px;top:290px"></div>
<span class="t " style="left:24.65px;top:291px;font-size:15px;color:#111;letter-spacing:0.187px;">Скольжение при раскрытии списков</span>
<div class="cb" style="left:4px;top:312px"></div>
<span class="t " style="left:24.65px;top:313px;font-size:15px;color:#111;letter-spacing:0.038px;">Сохранение вида эскизов панели задач</span>
<div class="cb" style="left:4px;top:334px"></div>
<span class="t" style="left:25.40px;top:335px;font-size:15px;color:#111;letter-spacing:-0.128px">Эффекты затухания или скольжения при обращении к меню</span>
<div class="cb" style="left:4px;top:356px"></div>
<span class="t" style="left:25.40px;top:357px;font-size:15px;color:#111;letter-spacing:0.098px">Эффекты затухания или скольжения при появлении подсказок</span>
</div>
<div class="" style="position:absolute;left:1025px;top:892px;width:424px;height:21.5px;background:#f0f0f0"></div>
<div class="" style="position:absolute;left:1047px;top:892px;width:335px;height:21.5px;background:#cdcdcd"></div>
<svg class="abs" style="left:1031px;top:896px" width="9" height="13" viewBox="0 0 9 13" fill="none" stroke="#444" stroke-width="1.7"><path d="M7 1.5 L2 6.5 L7 11.5"/></svg>
<svg class="abs" style="left:1433px;top:896px" width="9" height="13" viewBox="0 0 9 13" fill="none" stroke="#444" stroke-width="1.7"><path d="M2 1.5 L7 6.5 L2 11.5"/></svg>
<div class="btn def" style="left:1193px;top:946px;width:85.5px;height:25.5px"></div>
<span class="t " style="left:1227.65px;top:953px;font-size:13px;color:#111;letter-spacing:-1.883px;">OK</span>
<div class="btn" style="left:1288.2px;top:946px;width:85.5px;height:25.5px"></div>
<span class="t " style="left:1308.85px;top:953px;font-size:13px;color:#111;letter-spacing:-0.469px;">Отмена</span>
<div class="btn dis" style="left:1382.2px;top:946px;width:85.5px;height:25.5px"></div>
<span class="t " style="left:1392.45px;top:953px;font-size:13px;color:#838383;letter-spacing:-0.359px;">Применить</span>
<div class="" style="position:absolute;left:0px;top:1030px;width:1920px;height:50px;background:#2b3966"></div>
<div class="" style="position:absolute;left:556px;top:1030px;width:61px;height:50px;background:#424f7a"></div>
<div class="" style="position:absolute;left:742px;top:1030px;width:61px;height:50px;background:#424f7a"></div>
<div class="" style="position:absolute;left:189px;top:1077px;width:51px;height:3px;background:#8090c6"></div>
<div class="" style="position:absolute;left:499px;top:1077px;width:51px;height:3px;background:#8090c6"></div>
<div class="" style="position:absolute;left:556px;top:1077px;width:61px;height:3px;background:#8090c6"></div>
<div class="" style="position:absolute;left:623px;top:1077px;width:51px;height:3px;background:#8090c6"></div>
<div class="" style="position:absolute;left:685px;top:1077px;width:51px;height:3px;background:#8090c6"></div>
<div class="" style="position:absolute;left:742px;top:1077px;width:61px;height:3px;background:#8090c6"></div>
<svg class="abs" style="left:20px;top:1044.5px" width="20.4" height="20.6" viewBox="0 0 21 21" fill="#fff">
<path d="M0 3 L8.5 1.8 V10 H0Z M9.6 1.6 L20.5 0 V10 H9.6Z M0 11 H8.5 V19.2 L0 18Z M9.6 11 H20.5 V21 L9.6 19.4Z"/></svg>
<svg class="abs" style="left:79px;top:1044px" width="22" height="22" viewBox="0 0 22 22" fill="none" stroke="#fff" stroke-width="1.4"><circle cx="13.6" cy="8.2" r="6.6"/><path d="M9 13 L1 21"/></svg>
<svg class="abs" style="left:137px;top:1045px" width="26" height="19" viewBox="0 0 26 19" fill="none" stroke="#fff" stroke-width="1.1"><rect x="5.5" y="1.5" width="15" height="16"/><path d="M3.5 4.5 H1.5 V14.5 H3.5 M22.5 4.5 H24.5 V14.5 H22.5"/></svg>
<svg class="abs" style="left:201px;top:1042px" width="24" height="24" viewBox="0 0 24 24"><polygon points="14.44,0.66 18.29,2.25 16.82,5.37 18.63,7.18 21.75,5.71 23.34,9.56 20.10,10.72 20.10,13.28 23.34,14.44 21.75,18.29 18.63,16.82 16.82,18.63 18.29,21.75 14.44,23.34 13.28,20.10 10.72,20.10 9.56,23.34 5.71,21.75 7.18,18.63 5.37,16.82 2.25,18.29 0.66,14.44 3.90,13.28 3.90,10.72 0.66,9.56 2.25,5.71 5.37,7.18 7.18,5.37 5.71,2.25 9.56,0.66 10.72,3.90 13.28,3.90" fill="#fff"/><circle cx="12" cy="12" r="5.1" fill="#2b3966"/><circle cx="12" cy="12" r="7.4" fill="none" stroke="#fff" stroke-width="2.4"/><circle cx="12" cy="12" r="4.7" fill="#2b3966"/></svg>
<svg class="abs" style="left:260px;top:1039px" width="31" height="31" viewBox="0 0 31 31">
<path d="M10.5 9 V7.3 a5 5 0 0 1 10 0 V9" fill="none" stroke="#fff" stroke-width="1.4"/>
<path d="M1 8.5 H30 V30 H1Z" fill="#fff"/>
<rect x="9" y="12.5" width="6" height="6" fill="#f25022"/><rect x="16" y="12.5" width="6" height="6" fill="#7fba00"/><rect x="9" y="19.5" width="6" height="6" fill="#00a4ef"/><rect x="16" y="19.5" width="6" height="6" fill="#ffb900"/></svg>
<div class="" style="position:absolute;left:324px;top:1040px;width:27.5px;height:27px;box-sizing:border-box;background:#001c26;border:2px solid #00c8ff"></div>
<span class="t " style="left:328.10px;top:1045px;font-size:18px;color:#00c8ff;letter-spacing:-0.706px;">Ps</span>
<div class="" style="position:absolute;left:634px;top:1040px;width:27.5px;height:27px;box-sizing:border-box;background:#001c26;border:2px solid #00c8ff"></div>
<span class="t " style="left:638.10px;top:1045px;font-size:18px;color:#00c8ff;letter-spacing:-0.706px;">Ps</span>
<svg class="abs" style="left:385px;top:1040.5px" width="29" height="28" viewBox="0 0 29 28">
<path d="M1 2 a1.5 1.5 0 0 1 1.5-1.5 H26 L28 2.5 V26 a1.5 1.5 0 0 1-1.5 1.5 H2.5 A1.5 1.5 0 0 1 1 26Z" fill="#2a45c8"/>
<rect x="8" y=".5" width="13" height="8" fill="#c8ccd6"/><rect x="16" y="1.5" width="3.4" height="6" fill="#2a45c8"/>
<rect x="4.5" y="12" width="20" height="15.5" fill="#f7dede"/>
<path d="M6 15 H23 M6 18 H23 M6 21 H23 M6 24 H14" stroke="#e06a6a" stroke-width="1.2"/>
<rect x="14.5" y="21" width="9" height="6" fill="#fff"/><text x="19" y="26.4" font-size="6.5" text-anchor="middle" font-family="Liberation Sans, sans-serif" font-weight="bold" fill="#222">64</text></svg>
<svg class="abs" style="left:447.5px;top:1040.5px" width="28" height="28" viewBox="0 0 28 28"><defs><linearGradient id="tg447" x1="0" y1="0" x2="0" y2="1"><stop offset="0" stop-color="#37aee2"/><stop offset="1" stop-color="#1e96c8"/></linearGradient></defs>
<circle cx="14" cy="14" r="13.6" fill="url(#tg447)"/><path d="M5.6 13.6 L21.2 7.4 C21.9 7.1 22.5 7.6 22.3 8.5 L19.7 20.8 C19.5 21.6 19 21.8 18.3 21.4 L14.3 18.4 L12.3 20.3 L12.0 16.6 L19.4 9.9 L10.5 15.6 L6 14.4 C5.2 14.2 5.1 13.8 5.6 13.6Z" fill="#fff"/><path d="M12 16.6 L12.3 20.3 L14.3 18.4Z" fill="#b5cfe4"/><path d="M10.5 15.6 L12.3 20.3 L12 16.6 L19.4 9.9Z" fill="#d2e5f1"/></svg>
<svg class="abs" style="left:572px;top:1040.5px" width="28" height="28" viewBox="0 0 28 28"><defs><linearGradient id="tg572" x1="0" y1="0" x2="0" y2="1"><stop offset="0" stop-color="#37aee2"/><stop offset="1" stop-color="#1e96c8"/></linearGradient></defs>
<circle cx="14" cy="14" r="13.6" fill="url(#tg572)"/><path d="M5.6 13.6 L21.2 7.4 C21.9 7.1 22.5 7.6 22.3 8.5 L19.7 20.8 C19.5 21.6 19 21.8 18.3 21.4 L14.3 18.4 L12.3 20.3 L12.0 16.6 L19.4 9.9 L10.5 15.6 L6 14.4 C5.2 14.2 5.1 13.8 5.6 13.6Z" fill="#fff"/><path d="M12 16.6 L12.3 20.3 L14.3 18.4Z" fill="#b5cfe4"/><path d="M10.5 15.6 L12.3 20.3 L12 16.6 L19.4 9.9Z" fill="#d2e5f1"/></svg>
<svg class="abs" style="left:509px;top:1040px" width="29" height="29" viewBox="0 0 29 29">
<circle cx="14.5" cy="14.5" r="14" fill="#db4437"/>
<path d="M14.5 14.5 L2.4 7.5 A14 14 0 0 0 11 28.05 L17.5 17Z" fill="#0f9d58"/>
<path d="M14.5 14.5 L11 28.05 A14 14 0 0 0 26.6 7.5 L14.5 7.5Z" fill="#ffcd40"/>
<path d="M2.4 7.5 A14 14 0 0 1 26.6 7.5 L14.5 7.5 L8.4 11Z" fill="#db4437"/>
<circle cx="14.5" cy="14.5" r="6.6" fill="#f1f1f1"/><circle cx="14.5" cy="14.5" r="5.3" fill="#4285f4"/></svg>
<svg class="abs" style="left:696px;top:1045.5px" width="28" height="19" viewBox="0 0 28 19">
<rect x=".5" y=".5" width="27" height="17" fill="#7fd0f7" stroke="#3aa5e0"/><rect x="2" y="2" width="24" height="14" fill="#a9e0fb"/>
<circle cx="8.8" cy="7" r="4.2" fill="#f6f6f6"/><path d="M8.8 7 V2.8 A4.2 4.2 0 0 1 13 7Z" fill="#f5a623"/><path d="M8.8 7 H13 A4.2 4.2 0 0 1 6 10.2Z" fill="#3a8fd8"/>
<path d="M16 4 H25 M16 7 H25 M16 10 H25" stroke="#fff" stroke-width="1.6"/><path d="M3.5 13.5 H12" stroke="#f5a623" stroke-width="1.4"/><path d="M14 13.5 H24" stroke="#3a8fd8" stroke-width="1.4"/></svg>
<svg class="abs" style="left:757px;top:1042px" width="29" height="27" viewBox="0 0 29 27">
<path d="M6 1 L27 3 L25 18.5 L7.5 16.5Z" fill="#dfe3ea"/><path d="M7.5 2.3 L25.6 4 L24 17 L8.6 15.3Z" fill="#1a35c0"/>
<path d="M7.5 2.3 L25.6 4 L25 9 C18 6 12 9 8 12Z" fill="#4a6df0"/>
<path d="M12.5 9.5 l3 3.6 l6.5-8" stroke="#fff" stroke-width="2.2" fill="none"/>
<path d="M0.5 8 h6 v14 h-6z" fill="#c9ccd2"/><path d="M1.5 9.5 h4 v1.2 h-4z" fill="#6cbf4a"/>
<path d="M13.5 17.5 l5 .5 l.6 4 l-6.5 0z" fill="#b9bdc6"/><ellipse cx="15.5" cy="23.6" rx="7.5" ry="2.6" fill="#d9dce2"/></svg>
<svg class="abs" style="left:1533px;top:1044px" width="21" height="21" viewBox="0 0 21 21" fill="none" stroke="#fff" stroke-width="1.4"><circle cx="13.8" cy="5" r="3.3"/><circle cx="6.2" cy="10.2" r="3"/><path d="M.8 20 C1 15.5 3.5 13.6 6.2 13.6 C8.9 13.6 11.4 15.5 11.6 20"/><path d="M10.8 10.8 C12 9.4 13 9 13.8 9 C16.6 9 19.2 11 19.5 14.6"/></svg>
<svg class="abs" style="left:1579px;top:1049px" width="18" height="12" viewBox="0 0 18 12" fill="none" stroke="#fff" stroke-width="1.5"><path d="M1 10.5 L9 2 L17 10.5"/></svg>
<svg class="abs" style="left:1608px;top:1049px" width="22" height="13" viewBox="0 0 22 13"><rect x="1" y="1.2" width="17.6" height="10.6" fill="none" stroke="#fff" stroke-width="1.1"/><rect x="2.8" y="3" width="14" height="7" fill="#fff"/><rect x="19.2" y="4.4" width="1.5" height="4.2" fill="#fff"/></svg>
<svg class="abs" style="left:1637px;top:1047px" width="22" height="15" viewBox="0 0 22 15"><path d="M4.2 13.2 a3.4 3.4 0 0 1 .4-6.6 a4 4 0 0 1 6.6-2.6" fill="#fff" stroke="#fff" stroke-width=".8"/><path d="M8.4 14 a3.2 3.2 0 0 1-.3-6.3 a4.6 4.6 0 0 1 8.4-1.6 a3.6 3.6 0 0 1 4.2 3.3 a2.6 2.6 0 0 1-.9 4.6Z" fill="#fff" stroke="#2b3966" stroke-width="1"/></svg>
<svg class="abs" style="left:1669px;top:1047px" width="19" height="17" viewBox="0 0 19 17" fill="none" stroke="#fff" stroke-width="1.25"><path d="M1.8 15.8 A14.6 14.6 0 0 1 16.4 1.2"/><path d="M6.2 15.8 A10.2 10.2 0 0 1 16.4 5.6"/><path d="M10.6 15.8 A5.8 5.8 0 0 1 16.4 10"/><circle cx="15.6" cy="14.8" r="1.7" fill="#fff" stroke="none"/></svg>
<svg class="abs" style="left:1697px;top:1045px" width="23" height="19" viewBox="0 0 23 19" fill="none" stroke="#fff" stroke-width="1.3"><path d="M1.5 6.5 H4.5 L8.5 2.5 V16.5 L4.5 12.5 H1.5Z"/><path d="M11.5 6.5 a4.5 4.5 0 0 1 0 6"/><path d="M14.5 4 a8 8 0 0 1 0 11"/><path d="M17.6 1.5 a11.5 11.5 0 0 1 0 16"/></svg>
<span class="t " style="left:1731.55px;top:1048px;font-size:15px;color:#fff;letter-spacing:-1.418px;">РУС</span>
<span class="t " style="left:1796.25px;top:1035px;font-size:15px;color:#fff;letter-spacing:-0.298px;">0:14</span>
<span class="t " style="left:1775.25px;top:1058px;font-size:15px;color:#fff;letter-spacing:-0.430px;">06.07.2018</span>
<svg class="abs" style="left:1868px;top:1045px" width="22" height="21" viewBox="0 0 22 21" fill="none" stroke="#fff" stroke-width="1.4"><path d="M1.5 1 H20.5 V15.8 H13.3 L11 18.6 L8.7 15.8 H1.5Z"/></svg>
<div class="" style="position:absolute;left:1914px;top:1030px;width:1px;height:50px;background:#5b678f"></div>
</body></html>
